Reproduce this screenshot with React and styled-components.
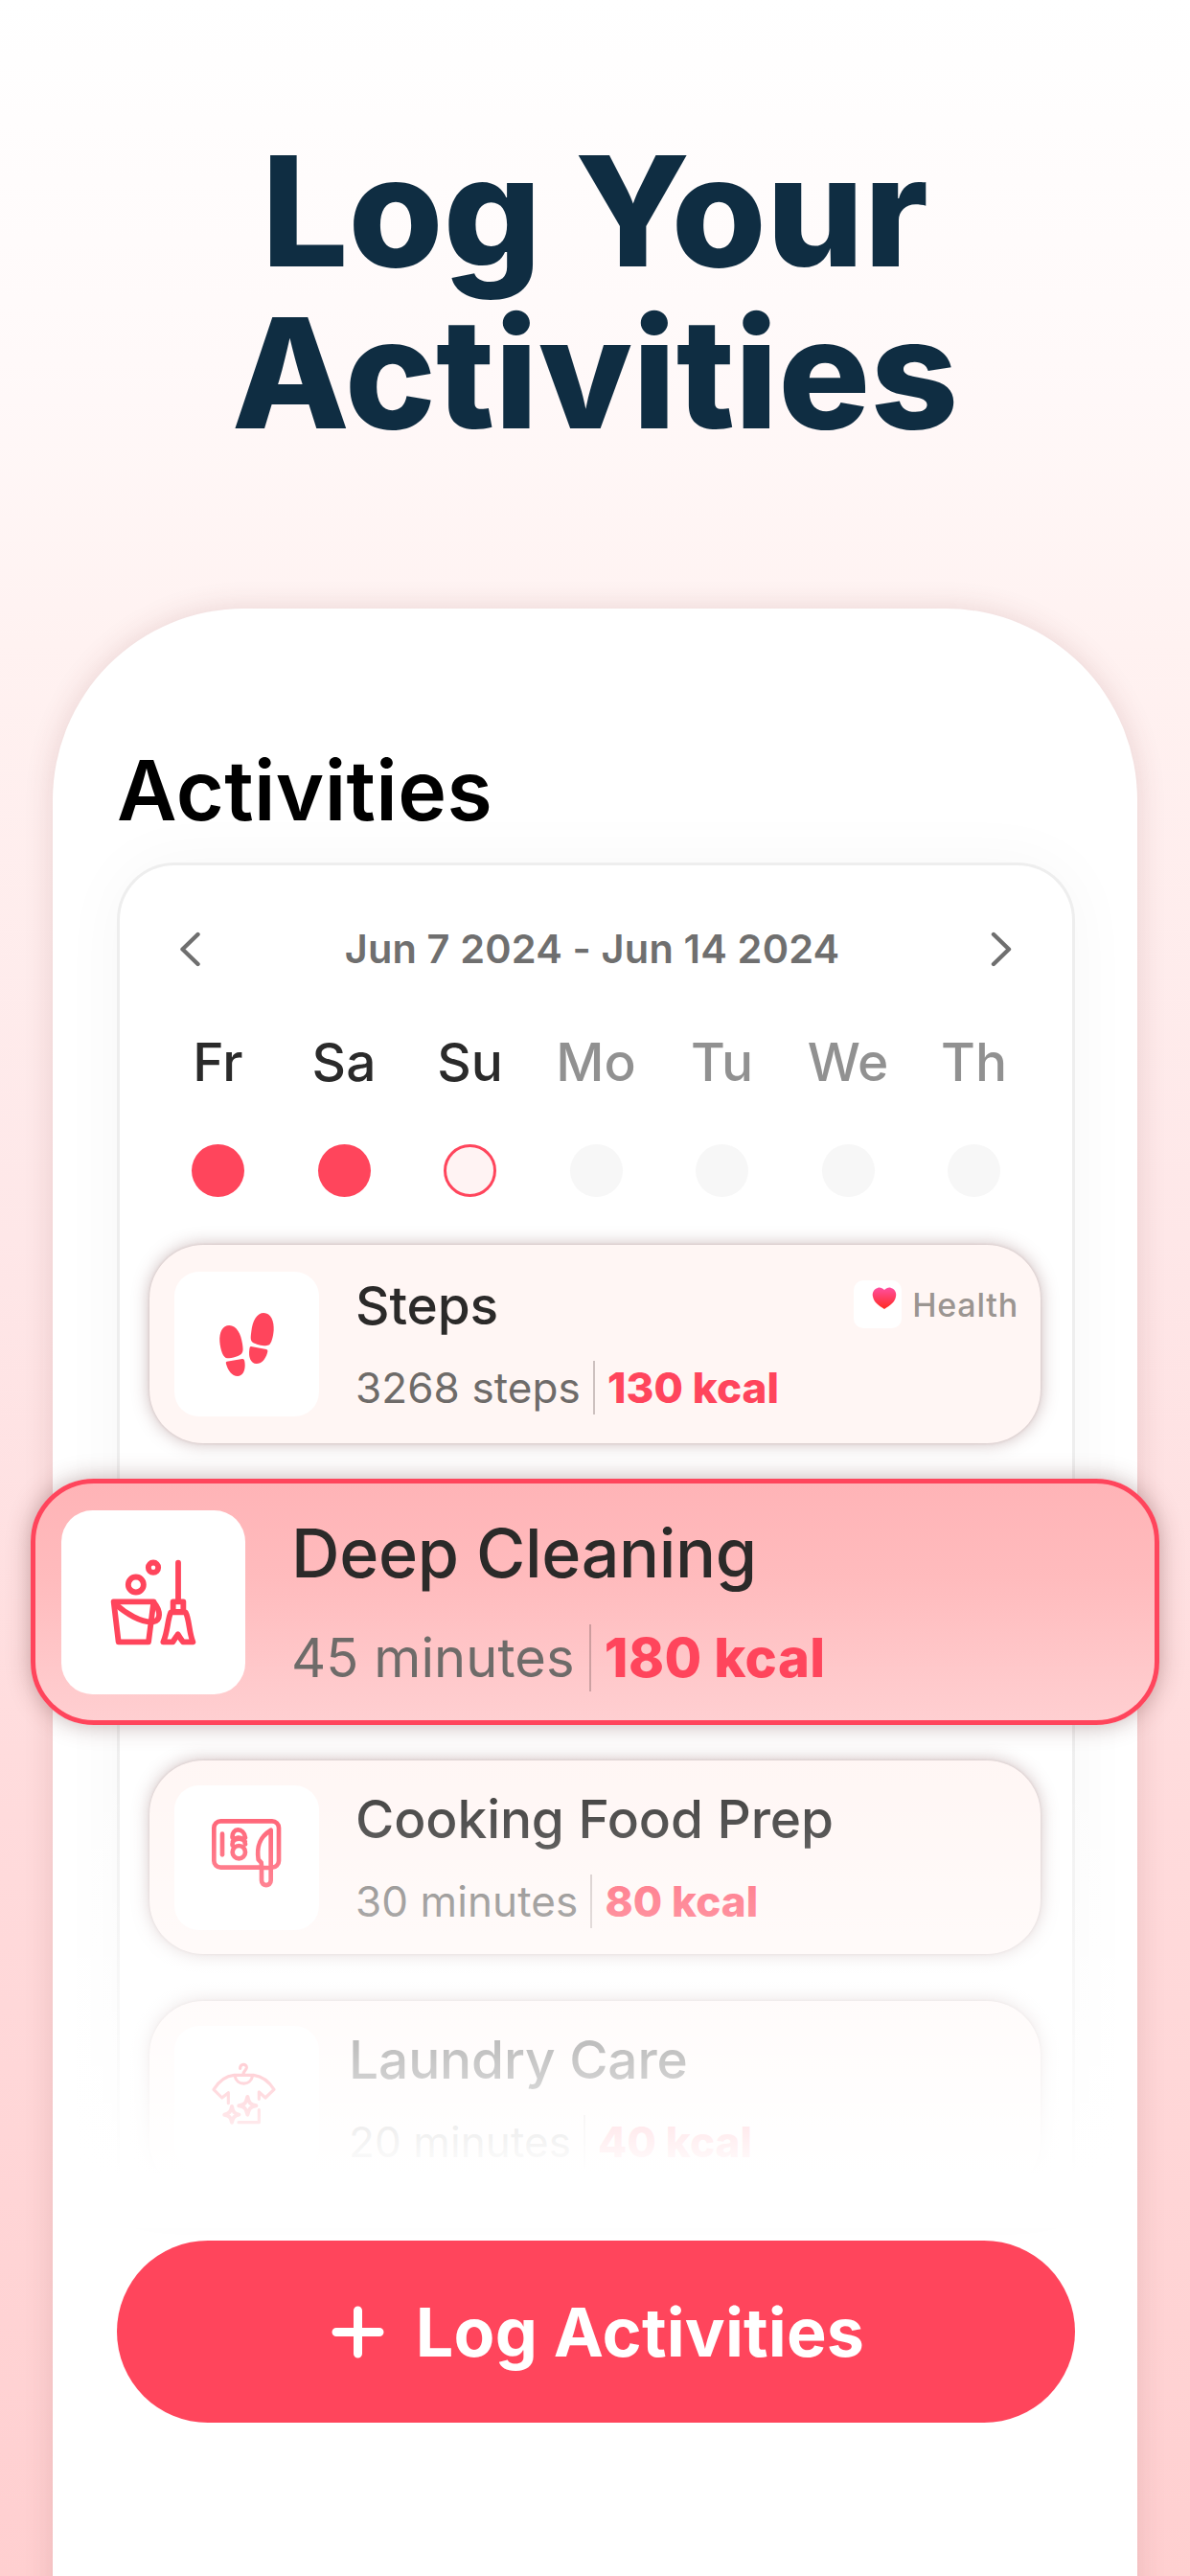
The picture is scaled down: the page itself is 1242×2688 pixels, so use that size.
import React from 'react'
import styled, { createGlobalStyle } from 'styled-components'

const GlobalStyle = createGlobalStyle`
  * { box-sizing: border-box; }
  body {
    margin: 0;
    font-family: Inter, "Liberation Sans", sans-serif;
  }
`

const Page = styled.div`
  width: 1242px;
  height: 2688px;
  overflow: hidden;
  display: flex;
  flex-direction: column;
  align-items: center;
  padding-top: 136px;
  background: linear-gradient(180deg, #ffffff 0%, #fff9f9 14%, #fff2f1 25%, #fee7e8 48%, #ffdcdd 68%, #ffcfd0 100%);
`

const Headline = styled.h1`
  flex: none;
  margin: 0;
  height: 499px;
  color: #0f2d42;
  font-size: 160px;
  font-weight: 800;
  line-height: 169px;
  letter-spacing: 0.1px;
  text-align: center;
`

const Phone = styled.main`
  position: relative;
  flex: none;
  width: 1132px;
  height: 2100px;
  padding: 140px 65px 0 67px;
  border-radius: 200px 200px 0 0;
  background: #fff;
  box-shadow: 0 0 30px rgba(120, 50, 50, 0.16);
`

const ScreenTitle = styled.h2`
  margin: 0 0 25px;
  color: #000;
  font-size: 86px;
  font-weight: 600;
  line-height: 100px;
  letter-spacing: 0.4px;
`

const Calendar = styled.section`
  height: 1390px;
  padding: 57px 30px 0;
  border: 3px solid #eeeeee;
  border-bottom: 0;
  border-radius: 60px 60px 0 0;
  background: #fff;
  box-shadow: 0 0 70px rgba(0, 0, 0, 0.035);
`

const RangeRow = styled.div`
  display: flex;
  align-items: center;
  justify-content: space-between;
  height: 60px;
  padding: 0 33px 0 32px;
  color: #6f6f6f;
  font-size: 41.5px;
  font-weight: 600;
  letter-spacing: 0.15px;
`

const RangeText = styled.span`
  margin-right: 7px;
`

const Chevron = styled.svg`
  width: 22px;
  height: 37px;
  fill: none;
  stroke: currentColor;
  stroke-width: 4.4;
  stroke-linecap: round;
  stroke-linejoin: round;
`

const Week = styled.div`
  display: grid;
  grid-template-columns: repeat(7, 131.5px);
  justify-content: center;
  margin-top: 55px;
`

const Day = styled.div`
  display: flex;
  flex-direction: column;
  align-items: center;
  gap: 53px;
  color: ${p => (p.$past ? '#2a2a2a' : '#919191')};
  font-size: 55px;
  font-weight: 500;
  line-height: 66px;
`

const dotFill = { done: '#ff455c', today: '#fff3f3', none: '#f7f7f7' }

const Dot = styled.span`
  width: 55px;
  height: 55px;
  border-radius: 50%;
  border: ${p => (p.$state === 'today' ? '3px solid #ff455c' : '0')};
  background: ${p => dotFill[p.$state]};
`

const Card = styled.article`
  position: relative;
  display: flex;
  align-items: center;
  gap: 38px;
  width: 930px;
  height: ${p => p.$height || 202}px;
  margin: ${p => p.$top}px 0 0 1px;
  padding: 0 26px;
  border-radius: 56px;
  background: #fff6f4;
  box-shadow: 0 0 3px rgba(120, 70, 70, 0.2), 0 0 18px rgba(110, 60, 60, 0.36);
`

const HighlightCard = styled(Card)`
  gap: 48px;
  width: 1178px;
  height: 257px;
  margin: 37px 0 0 -123px;
  padding: 0 27px;
  border: 5px solid #ff455c;
  border-radius: 66px;
  background: linear-gradient(180deg, #ffb4b7 0%, #ffbbbd 40%, #ffcfd1 100%);
  box-shadow: 0 0 24px rgba(100, 50, 50, 0.38);
`

const Tile = styled.div`
  flex: none;
  width: ${p => p.$size}px;
  height: ${p => p.$size}px;
  border-radius: ${p => p.$size * 0.17}px;
  background: #fff;
  color: #ff455c;

  svg {
    display: block;
    width: 100%;
    height: 100%;
  }
`

const Info = styled.div`
  display: flex;
  flex-direction: column;
  gap: ${p => (p.$large ? 32 : 25)}px;
  margin-left: ${p => p.$shift || 0}px;
`

const Title = styled.h3`
  margin: 0;
  color: #2b2a29;
  font-size: ${p => (p.$large ? 70 : 55)}px;
  font-weight: 500;
  line-height: ${p => (p.$large ? 84 : 66)}px;
  letter-spacing: ${p => (p.$large ? -0.35 : -0.1)}px;
  white-space: nowrap;
`

const Meta = styled.div`
  display: flex;
  align-items: center;
  color: #6e6b69;
  font-size: ${p => (p.$large ? 56 : 44)}px;
  line-height: ${p => (p.$large ? 70 : 56)}px;
  letter-spacing: 0.1px;
  white-space: nowrap;
`

const Burn = styled.strong`
  margin-left: ${p => (p.$large ? 15 : 13)}px;
  padding-left: ${p => (p.$large ? 14 : 13)}px;
  border-left: 2px solid rgba(90, 70, 70, 0.3);
  color: #ff455c;
  font-weight: 800;
  letter-spacing: ${p => (p.$large ? 0.4 : 0.1)}px;
`

const Source = styled.div`
  display: flex;
  align-items: center;
  gap: 11px;
  align-self: flex-start;
  margin: 37px -3px 0 auto;
  color: #9b9591;
  font-size: 34px;
  font-weight: 500;
  letter-spacing: 0.8px;
`

const HealthBadge = styled.svg`
  width: 50px;
  height: 50px;
  border-radius: 10px;
  background: #fff;
`

const Fade = styled.div`
  position: absolute;
  left: 20px;
  right: 20px;
  top: 1180px;
  height: 510px;
  background: linear-gradient(180deg, rgba(255, 255, 255, 0) 0%, #fff 455px);
`

const LogButton = styled.button`
  position: relative;
  display: flex;
  align-items: center;
  justify-content: center;
  gap: 33px;
  width: 1000px;
  height: 190px;
  margin-top: 48px;
  padding: 0 0 0 4px;
  border: 0;
  border-radius: 95px;
  background: #ff455c;
  color: #fff;
  font-family: inherit;
  font-size: 70px;
  font-weight: 700;
  letter-spacing: 0.15px;
`

const PlusIcon = styled.svg`
  width: 55px;
  height: 55px;
  stroke: currentColor;
  stroke-width: 9;
  stroke-linecap: round;
`

const StepsIcon = () => (
  <svg viewBox="-54 -39 453 453" fill="currentColor">
    <path d="M118 129c22 0 37 26 41 58 2 14 3 22-1 28-5 10-32 17-46 17-13 0-22-26-24-52-2-30 9-51 30-51z" />
    <path d="M110 242l48-8c5-1 7 2 8 8 4 25-4 45-22 46-18 0-30-17-36-38-1-5-1-7 2-8z" />
    <path d="M226 90c22 0 33 25 31 55-2 24-8 40-14 45-7 6-40 0-52-8-8-6-6-18-4-34 4-34 17-58 39-58z" />
    <path d="M186 195l48 9c4 1 5 4 3 11-6 20-18 34-34 34-18-1-26-20-22-46 1-6 2-8 5-8z" />
  </svg>
)

const CleaningIcon = () => (
  <svg viewBox="132 138 576 576" fill="none" stroke="currentColor" strokeWidth="17.500" strokeLinecap="round" strokeLinejoin="round">
    <circle cx="420" cy="317" r="15.500" />
    <circle cx="365.500" cy="370.500" r="24" />
    <path d="M296 424h125l-16 126h-94z" />
    <path d="M300 430c34 31 82 60 119 57 26-4 24-34 4-59" />
    <path d="M498 302v118" />
    <path d="M482 424h32v32h-32z" />
    <path d="M475 457h46c12 22 10 60 23 93h-31c-6-8-11-16-16-24-6 9-11 16-16 24h-30c15-33 13-70 24-93z" />
  </svg>
)

const CookingIcon = () => (
  <svg viewBox="-54 -39 453 453" fill="none" stroke="currentColor" strokeWidth="14" strokeLinecap="round" strokeLinejoin="round">
    <path d="M214 218H91a21 21 0 0 1-21-21V94a21 21 0 0 1 21-21h161a21 21 0 0 1 21 21v103a21 21 0 0 1-21 21h-3" />
    <path d="M96 113v65" />
    <circle cx="148" cy="170" r="20" />
    <path d="M128 149c-4-30 36-34 40-4M128 125c-4-32 36-34 40 0M129 137c8-12 30-12 38 0" />
    <path d="M248 101v158c0 19-29 19-29 0v-45l-1-11-9-10c-5-34-1-68 39-92zM219 219h29" />
  </svg>
)

const LaundryIcon = () => (
  <svg viewBox="-54 -39 453 453" fill="none" stroke="currentColor" strokeWidth="9.500" strokeLinecap="round" strokeLinejoin="round">
    <path d="M152 94c-1-16 21-16 20-2-1 9-9 7-10 20" />
    <path d="M115 203v-33l-20 16-26-26c15-24 33-42 64-45h61c30 4 49 21 64 45l-27 26-20-18v22" />
    <path d="M135 116c6 34 50 34 56 0" />
    <path d="M211 224v39h-64" />
    <path strokeWidth="12" d="M175 183c4 19 9 25 27 28-18 3-23 9-27 28-4-19-9-25-27-28 18-3 23-9 27-28zM126 213c3 17 8 23 22 26-14 3-19 8-22 24-3-16-8-21-23-24 15-4 20-9 23-26z" />
  </svg>
)

const days = [
  { label: 'Fr', state: 'done' },
  { label: 'Sa', state: 'done' },
  { label: 'Su', state: 'today' },
  { label: 'Mo', state: 'none' },
  { label: 'Tu', state: 'none' },
  { label: 'We', state: 'none' },
  { label: 'Th', state: 'none' },
]

const App = () => {
  return (
    <Page>
      <GlobalStyle />
      <Headline>
        Log Your
        <br />
        Activities
      </Headline>
      <Phone>
        <ScreenTitle>Activities</ScreenTitle>
        <Calendar>
          <RangeRow>
            <Chevron viewBox="0 0 22 37"><path d="M19.500 3L3.500 18.500l16 15.500" /></Chevron>
            <RangeText>Jun 7 2024 - Jun 14 2024</RangeText>
            <Chevron viewBox="0 0 22 37"><path d="M3 3l16 15.500L3 34" /></Chevron>
          </RangeRow>
          <Week>
            {days.map(day => (
              <Day key={day.label} $past={day.state !== 'none'}>
                {day.label}
                <Dot $state={day.state} />
              </Day>
            ))}
          </Week>

          {/* Activity list */}
          <Card $top={50} $height={207}>
            <Tile $size={151}><StepsIcon /></Tile>
            <Info>
              <Title>Steps</Title>
              <Meta>3268 steps<Burn>130 kcal</Burn></Meta>
            </Info>
            <Source>
              <HealthBadge viewBox="0 0 50 50">
                <defs>
                  <linearGradient id="heart" x1="0" y1="0" x2="0" y2="1">
                    <stop offset="0" stopColor="#ff4fa0" />
                    <stop offset="1" stopColor="#ff2a20" />
                  </linearGradient>
                </defs>
                <path fill="url(#heart)" d="M32 10c2-2 5-3 7-2 4 1 6 5 5 9-1 6-6 9-12 13-6-4-11-7-12-13-1-4 1-8 5-9 2-1 5 0 7 2z" />
              </HealthBadge>
              Health
            </Source>
          </Card>
          <HighlightCard>
            <Tile $size={192}><CleaningIcon /></Tile>
            <Info $large>
              <Title $large>Deep Cleaning</Title>
              <Meta $large>45 minutes<Burn $large>180 kcal</Burn></Meta>
            </Info>
          </HighlightCard>
          <Card $top={37}>
            <Tile $size={151}><CookingIcon /></Tile>
            <Info>
              <Title>Cooking Food Prep</Title>
              <Meta>30 minutes<Burn>80 kcal</Burn></Meta>
            </Info>
          </Card>
          <Card $top={49}>
            <Tile $size={151}><LaundryIcon /></Tile>
            <Info $shift={-7}>
              <Title>Laundry Care</Title>
              <Meta>20 minutes<Burn>40 kcal</Burn></Meta>
            </Info>
          </Card>
        </Calendar>
        <Fade />
        <LogButton>
          <PlusIcon viewBox="0 0 55 55"><path d="M27.500 5v45M5 27.500h45" /></PlusIcon>
          Log Activities
        </LogButton>
      </Phone>
    </Page>
  )
}

export default App
